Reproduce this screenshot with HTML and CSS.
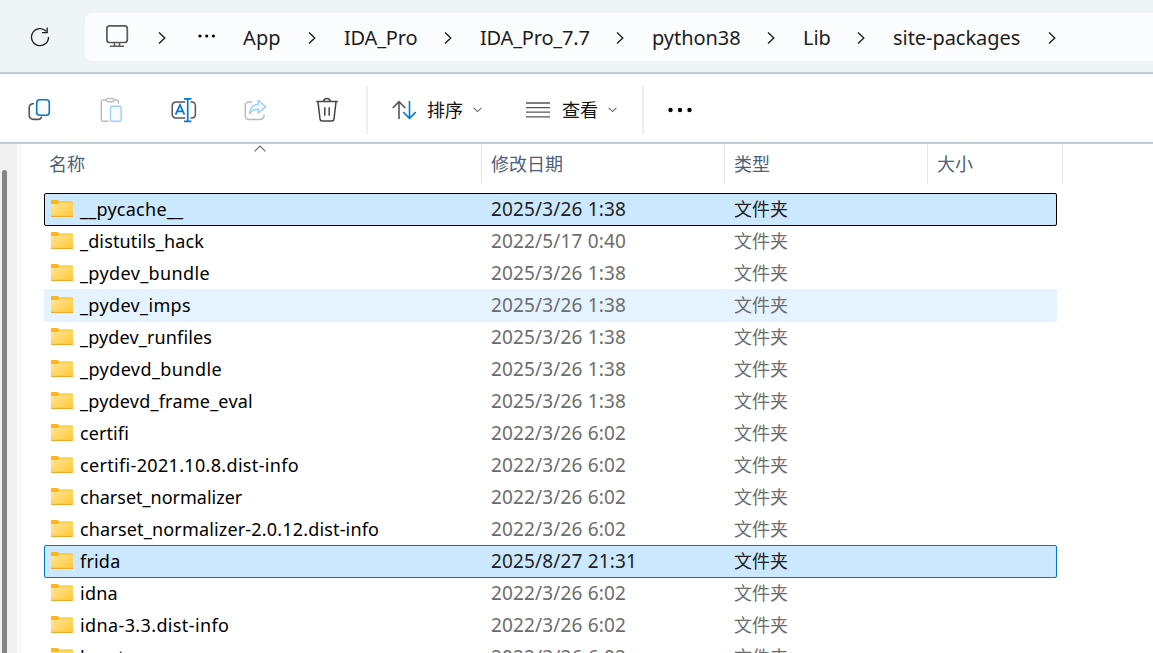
FILE: index.html
```html
<!DOCTYPE html>
<html lang="zh-CN">
<head>
<meta charset="utf-8">
<title>site-packages</title>
<link rel="stylesheet" href="styles.css">
</head>
<body>
<svg class="defs" aria-hidden="true">
  <defs>
    <linearGradient id="folder-fill" x1="0" y1="0" x2="1" y2="1">
      <stop offset="0" stop-color="#ffe59a"/><stop offset="1" stop-color="#ffc935"/>
    </linearGradient>
    <symbol id="chevron" viewBox="0 0 8 14"><path d="M1 1.4 6.8 7 1 12.6" fill="none" stroke="#1f1f1f" stroke-width="1.4"/></symbol>
    <symbol id="caret" viewBox="0 0 9 6"><path d="M.6.8 4.5 4.6 8.4.8" fill="none" stroke="#666" stroke-width="1.1"/></symbol>
    <symbol id="folder" viewBox="0 0 22 17">
      <path d="M0 1Q0 0 1 0H6.5L8.5 1.5H21Q22 1.5 22 2.5V6H0Z" fill="#f8b71c"/>
      <path d="M0 4H6.5L8.5 2.6H22V16.2Q22 17 21 17H1Q0 17 0 16.2Z" fill="url(#folder-fill)"/>
      <path d="M.2 16.4H21.8" stroke="#eaa926" stroke-width="1.1"/>
    </symbol>
  </defs>
</svg>
<header class="nav">
  <svg class="refresh" viewBox="0 0 20 20"><path d="M18.5 10A8.5 8.5 0 1 1 16.2 4.3M17.2.6V5.6H12" fill="none" stroke="#1d1d1d" stroke-width="1.3"/></svg>
  <div class="address">
    <svg class="monitor" viewBox="0 0 24 24"><rect x="1.9" y="1.9" width="20.4" height="16.6" rx="2.8" fill="none" stroke="#5a5a5a" stroke-width="1.7"/><path d="M9.5 19V22M14.5 19V22M4.8 22.2H19.2" fill="none" stroke="#5a5a5a" stroke-width="1.5"/></svg>
    <svg class="chev chev-first"><use href="#chevron"/></svg>
    <svg class="dots" viewBox="0 0 18 4"><circle cx="2" cy="2" r="1.6"/><circle cx="8.7" cy="2" r="1.6"/><circle cx="15.4" cy="2" r="1.6"/></svg>
    <span class="crumb w-app">App</span><svg class="chev"><use href="#chevron"/></svg>
    <span class="crumb w-ida">IDA_Pro</span><svg class="chev"><use href="#chevron"/></svg>
    <span class="crumb w-ver">IDA_Pro_7.7</span><svg class="chev"><use href="#chevron"/></svg>
    <span class="crumb w-py">python38</span><svg class="chev"><use href="#chevron"/></svg>
    <span class="crumb w-lib">Lib</span><svg class="chev"><use href="#chevron"/></svg>
    <span class="crumb w-site">site-packages</span><svg class="chev chev-last"><use href="#chevron"/></svg>
  </div>
</header>
<div class="toolbar">
  <svg class="tool" viewBox="0 0 26 26" fill="none" stroke-width="1.6"><path d="M7 6.8H5.8A3.6 3.6 0 0 0 2.2 10.4V18.2A4.2 4.2 0 0 0 6.4 22.4H11A3.6 3.6 0 0 0 14.6 19.6" stroke="#555"/><rect x="9.7" y="2.8" width="12.6" height="15.4" rx="3" stroke="#0078d4" fill="#fafafa"/></svg>
  <svg class="tool" viewBox="0 0 26 26" fill="none" stroke-width="1.4"><path d="M7.3 3H4A1.7 1.7 0 0 0 2.3 4.7V22.6A1.7 1.7 0 0 0 4 24.3H9.5M14.8 3H17.6A1.7 1.7 0 0 1 19.3 4.7V6.8" stroke="#bbb"/><rect x="7.2" y="1.5" width="7.6" height="3.2" rx="1.6" stroke="#bbb"/><rect x="11.5" y="9.3" width="10.6" height="15" rx="1.6" stroke="#9cd0f6" fill="#f7fbfe"/></svg>
  <svg class="tool" viewBox="0 0 26 26" fill="none" stroke-width="1.5"><path d="M14.2 5H5A3.8 3.8 0 0 0 1.2 8.8V17.2A3.8 3.8 0 0 0 5 21H14.2M19.5 5H20.8A3.8 3.8 0 0 1 24.4 8.8V17.2A3.8 3.8 0 0 1 20.8 21H19.5" stroke="#555"/><path d="M4.6 17.6 9 7.8 13.4 17.6M6.2 14.4H11.8M13 1.8H20.4M16.7 1.8V24.4M13 24.4H20.4" stroke="#0078d4" stroke-width="1.7"/></svg>
  <svg class="tool" viewBox="0 0 26 26" fill="none" stroke-width="1.5"><path d="M9 4.9H6A3.8 3.8 0 0 0 2.3 8.7V18.8A3.8 3.8 0 0 0 6 22.6H17.3A3.8 3.8 0 0 0 21 18.8V17.5" stroke="#bbb"/><path d="M15.2 3.3 22.8 9.7 15.2 16V12.3C11 12.2 8.6 13.6 6.6 16.8 6.8 11.2 9.9 7.6 15.2 7.2Z" stroke="#9cd0f6" fill="#f7fbfe" stroke-linejoin="round"/></svg>
  <svg class="tool tool-last" viewBox="0 0 26 26" fill="none" stroke="#454545" stroke-width="1.5"><path d="M2.2 4.6H23.8M9.7 4.4A3.2 2.8 0 0 1 16.3 4.4M4 4.8 6 21.8A2.6 2.6 0 0 0 8.6 24H17.4A2.6 2.6 0 0 0 20 21.8L22 4.8M10.8 10.2V18.7M15.2 10.2V18.7"/></svg>
  <i class="split split-one"></i>
  <svg class="sort" viewBox="0 0 24 20" fill="none" stroke-width="1.6"><path d="M7 19V1.6M.7 8 7 1.6 13.3 8" stroke="#555"/><path d="M17.5 1V18.4M11.2 12 17.5 18.4 23.8 12" stroke="#0078d4"/></svg>
  <span class="label">排序</span><svg class="caret"><use href="#caret"/></svg>
  <svg class="lines" viewBox="0 0 24 16"><path d="M0 1H24M0 5.6H24M0 10.2H24M0 14.8H24" stroke="#555" stroke-width="1.3"/></svg>
  <span class="label">查看</span><svg class="caret"><use href="#caret"/></svg>
  <i class="split split-two"></i>
  <svg class="more" viewBox="0 0 24 6"><circle cx="2.5" cy="3" r="2.2"/><circle cx="12" cy="3" r="2.2"/><circle cx="21.5" cy="3" r="2.2"/></svg>
</div>
<main class="content">
  <aside class="gutter"><div class="thumb"></div></aside>
  <section class="files">
    <div class="head">
      <div class="col col-name">名称<svg class="asc" viewBox="0 0 12 7"><path d="M.6 6.3 6 1 11.4 6.3" fill="none" stroke="#666" stroke-width="1.1"/></svg></div>
      <div class="col col-date">修改日期</div><div class="col col-type">类型</div><div class="col col-size">大小</div>
    </div>
    <div class="rows" id="rows"></div>
  </section>
</main>
<script src="files.js"></script>
</body>
</html>
```
FILE: styles.css
```css
* { box-sizing: border-box; }
body { margin: 0; width: 1153px; height: 653px; overflow: hidden; background: #fff; color: #000; font: 18px/32px "Noto Sans", "Noto Sans CJK SC", sans-serif; display: flex; flex-direction: column; }
svg { display: block; flex: none; }
.defs { position: absolute; width: 0; height: 0; }
.nav { flex: none; height: 74px; border-bottom: 2px solid #bccdd4; background: #eff4f7; display: flex; align-items: flex-start; }
.refresh { width: 20px; height: 20px; margin: 27px 35px 0 30px; }
.address { flex: 1; height: 48px; margin-top: 13px; padding-left: 20px; border-radius: 7px 0 0 7px; background: #fbfcfe; display: flex; align-items: center; font-size: 20px; color: #1d1d1d; }
.monitor { width: 24px; height: 24px; margin-bottom: 2px; }
.chev { width: 8px; height: 14px; margin: 2px 28px 0 27px; }
.chev-first { margin-right: 31px; margin-left: 29px; }
.chev-last { margin-left: 28px; }
.dots { width: 18px; height: 4px; margin: 0 27px 3px 1px; }
.crumb { flex: none; white-space: nowrap; padding-top: 2px; }
.w-app { width: 38px; letter-spacing: .1px; }
.w-ida { width: 73px; letter-spacing: -.2px; }
.w-ver { width: 109px; letter-spacing: -.2px; }
.w-py { width: 88px; letter-spacing: -.05px; }
.w-lib { width: 27px; letter-spacing: -.1px; }
.w-site { width: 127px; letter-spacing: -.05px; }
.toolbar { flex: none; height: 70px; border-bottom: 2px solid #bccdd4; display: flex; align-items: center; padding: 4px 0 0 27px; }
.tool { width: 26px; height: 26px; margin-right: 46px; }
.tool-last { margin-left: -1px; }
.split { width: 2px; height: 48px; background: #eee; }
.split-one { margin: 0 24px 0 -20px; }
.split-two { margin: 0 24px 0 25px; }
.sort { width: 24px; height: 20px; margin-right: 11px; }
.label { color: #111; }
.caret { width: 9px; height: 6px; margin-left: 10px; }
.lines { width: 24px; height: 16px; margin: 0 12px 0 44px; }
.more { width: 24px; height: 6px; }
.content { flex: 1; min-height: 0; display: flex; overflow: hidden; }
.gutter { width: 21px; flex: none; background: linear-gradient(90deg, #f0f0f0 17px, #fff 17px, #fff 19px, #f5f5f5 19px); padding: 26px 0 0 2px; }
.thumb { width: 5px; height: 100%; background: #858585; border-radius: 3px 3px 0 0; }
.files { padding-left: 23px; }
.head { display: flex; height: 40px; color: #4c607a; line-height: 41px; }
.col { border-right: 1px solid #e5e5e5; padding-left: 9px; position: relative; }
.col-name { width: 438px; padding-left: 5px; }
.col-date { width: 243px; }
.col-type { width: 203px; }
.col-size { width: 135px; }
.asc { position: absolute; left: 210px; top: 1px; width: 12px; height: 7px; }
.rows { margin-top: 9px; width: 1013px; }
.row { display: grid; grid-template-columns: 29px 411px 243px 1fr; height: 33px; margin-bottom: -1px; padding: 0 6px; border: 1px solid transparent; line-height: 31px; color: #6d6d6d; align-items: center; white-space: nowrap; }
.folder { width: 22px; height: 17px; margin-bottom: 2px; }
.name { color: #000; }
.date { font-size: 19px; letter-spacing: .15px; }
.selected { background: #cce8ff; border-color: #0078c8; border-radius: 2px; color: #222; }
.focused { border-color: #000; }
.hover { background: #e5f3ff; border-radius: 2px; }
```
FILE: files.js
```js
// name, modified, row state, letter spacing in px
const files = [
  ["__pycache__", "2025/3/26 1:38", "selected focused", 0.25],
  ["_distutils_hack", "2022/5/17 0:40", "", 0.15],
  ["_pydev_bundle", "2025/3/26 1:38", "", 0.38],
  ["_pydev_imps", "2025/3/26 1:38", "hover", 0.36],
  ["_pydev_runfiles", "2025/3/26 1:38", "", 0.15],
  ["_pydevd_bundle", "2025/3/26 1:38", "", 0.42],
  ["_pydevd_frame_eval", "2025/3/26 1:38", "", 0.22],
  ["certifi", "2022/3/26 6:02", "", 0.1],
  ["certifi-2021.10.8.dist-info", "2022/3/26 6:02", "", 0.33],
  ["charset_normalizer", "2022/3/26 6:02", "", 0],
  ["charset_normalizer-2.0.12.dist-info", "2022/3/26 6:02", "", 0.17],
  ["frida", "2025/8/27 21:31", "selected", 0.2],
  ["idna", "2022/3/26 6:02", "", 0.25],
  ["idna-3.3.dist-info", "2022/3/26 6:02", "", 0.38],
  ["keystone", "2022/3/26 6:02", "", 0.2]
];
document.getElementById("rows").innerHTML = files.map(([name, date, state, track]) =>
  `<div class="row ${state}"><svg class="folder"><use href="#folder"/></svg><span class="name" style="letter-spacing:${track}px">${name}</span><span class="date">${date}</span><span>文件夹</span></div>`).join("");
```
